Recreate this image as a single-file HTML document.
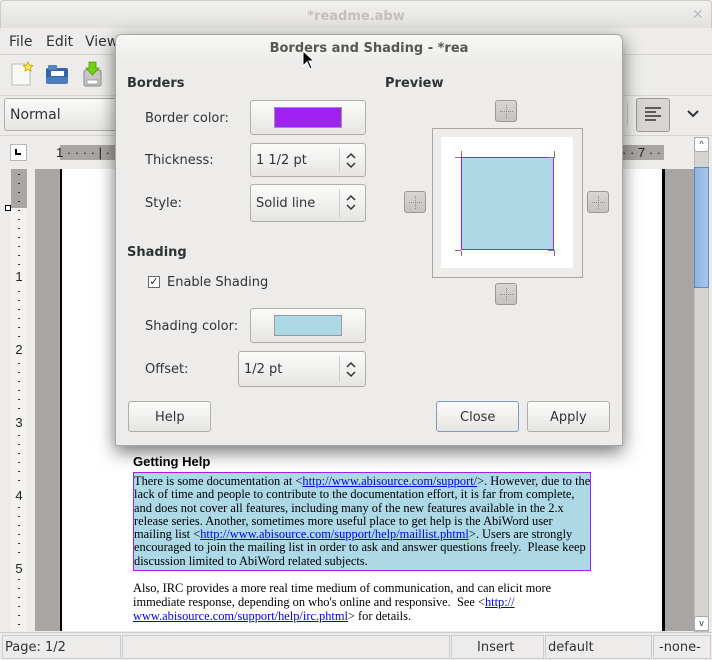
<!DOCTYPE html>
<html><head><meta charset="utf-8"><style>
*{margin:0;padding:0;box-sizing:border-box}
body{width:712px;height:660px;overflow:hidden;background:#edecea;font-family:"Liberation Sans","DejaVu Sans",sans-serif;font-size:13px;color:#2e3436;position:relative}
.a{position:absolute}
.btn{position:absolute;border:1px solid #b0aeaa;border-radius:3px;background:linear-gradient(#fbfbfa,#e6e5e2);}
.lbl{position:absolute;font-size:13px;color:#2e3436;white-space:nowrap;font-family:"DejaVu Sans",sans-serif}
.small{position:absolute;width:22px;height:22px;border:1px solid #9a9894;border-radius:3px;background:linear-gradient(#d8d7d4,#c4c3bf)}
.small:before{content:"";position:absolute;left:10px;top:4px;height:13px;border-left:1px dotted #8a8a8a}
.small:after{content:"";position:absolute;top:10px;left:4px;width:13px;border-top:1px dotted #8a8a8a}
.doc{position:absolute;font-family:"Liberation Serif",serif;font-size:12.4px;white-space:nowrap;color:#000}
.doc a{color:#00e;text-decoration:underline}
.spin{position:absolute;right:0;top:4px;bottom:4px;width:26px;border-left:1px solid #ccc}
</style></head><body>
<!-- title bar -->
<div class="a" style="left:0;top:0;width:712px;height:28px;background:linear-gradient(#f2f1f0,#e2e1df);border:1px solid #cfcdca;border-bottom:none;border-radius:4px 4px 0 0"></div>
<div class="a" style="left:0;top:9px;width:712px;text-align:center;font-weight:bold;color:#c2c0bc;font-size:13px;font-family:'DejaVu Sans',sans-serif">*readme.abw</div>
<div class="a" style="left:692px;top:6px;color:#bbb;font-size:14px;font-weight:bold">✕</div>
<!-- menu -->
<div class="a" style="left:0;top:28px;width:712px;height:27px;background:#edecea;border-bottom:1px solid #d6d4d0"></div>
<div class="lbl" style="left:9px;top:34px;font-size:14px">File</div>
<div class="lbl" style="left:46px;top:34px;font-size:14px">Edit</div>
<div class="lbl" style="left:85px;top:34px;font-size:14px">View</div>
<!-- toolbar -->
<div class="a" style="left:0;top:55px;width:712px;height:41px;background:#edecea;border-bottom:1px solid #d6d4d0"></div>
<svg class="a" style="left:8px;top:60px" width="100" height="28">
<path d="M4 4h13l5 5v16H4z" fill="#f8f8f6" stroke="#bbb"/><path d="M20 2l1.5 3 3.3.5-2.4 2.3.6 3.2-3-1.6-3 1.6.6-3.2-2.4-2.3 3.3-.5z" fill="#fce94f" stroke="#c4a000" stroke-width=".8"/>
<rect x="38" y="8" width="22" height="15" rx="2" fill="#3465a4"/><rect x="40" y="5" width="9" height="5" rx="1" fill="#5584c4"/><rect x="43" y="11" width="13" height="5" fill="#fff"/><rect x="38" y="17" width="22" height="7" rx="2" fill="#4a7cbf"/>
<rect x="76" y="10" width="17" height="16" rx="2" fill="#c8c8c4" stroke="#888"/><rect x="79" y="20" width="11" height="4" fill="#fff" stroke="#777" stroke-width=".6"/><path d="M81 2h7v6h3l-6.5 7-6.5-7h3z" fill="#73d216" stroke="#4e9a06" stroke-width=".8"/>
</svg>
<!-- format toolbar -->
<div class="a" style="left:0;top:96px;width:712px;height:40px;background:#edecea;border-bottom:1px solid #d6d4d0"></div>
<div class="btn" style="left:4px;top:98px;width:140px;height:33px"></div>
<div class="lbl" style="left:10px;top:107px;font-size:14px">Normal</div>
<div class="a" style="left:627px;top:103px;width:1px;height:22px;background:#c8c6c2"></div>
<div class="a" style="left:636px;top:98px;width:34px;height:34px;border:1px solid #9a9894;border-radius:3px;background:#d6d5d2"></div>
<svg class="a" style="left:643px;top:106px" width="22" height="18"><g stroke="#333" stroke-width="1.6"><path d="M2 2h16M2 6h11M2 10h16M2 14h11"/></g></svg>
<svg class="a" style="left:687px;top:110px" width="12" height="8"><path d="M1 1l5 5 5-5" stroke="#333" stroke-width="2" fill="none"/></svg>
<!-- ruler row -->
<div class="a" style="left:10px;top:144px;width:17px;height:17px;border:1px solid #b8b6b2;background:#fff"></div>
<div class="a" style="left:15px;top:149px;width:6px;height:6px;border-left:2px solid #000;border-bottom:2px solid #000"></div>
<div class="a" style="left:60px;top:145px;width:604px;height:15px;background:#a9a5a2"></div>
<div class="a" style="left:56px;top:145px;font-size:13px;color:#222">1 · · · · | ·</div>
<div class="a" style="left:622px;top:145px;font-size:13px;color:#222">· · 7 · ·</div>
<!-- left ruler -->
<div class="a" style="left:11px;top:169px;width:16px;height:462px;background:#f3f2f0"></div>
<div class="a" style="left:18px;top:174px;width:2px;height:456px;background:repeating-linear-gradient(#333 0 1px,transparent 1px 9px)"></div>
<div class="a" style="left:11px;top:169px;width:16px;height:39px;background:#a9a5a2"></div>
<div class="a" style="left:18px;top:174px;width:2px;height:34px;background:repeating-linear-gradient(#333 0 1px,transparent 1px 9px)"></div>
<div class="a" style="left:5px;top:205px;width:6px;height:6px;border:1px solid #000;background:#fff"></div>
<div class="a" style="left:12px;top:240px;width:14px;text-align:center;font-size:13px;color:#222;line-height:73px"><span style="background:#f3f2f0">1</span><br><span style="background:#f3f2f0">2</span><br><span style="background:#f3f2f0">3</span><br><span style="background:#f3f2f0">4</span><br><span style="background:#f3f2f0">5</span></div>
<!-- doc area -->
<div class="a" style="left:35px;top:169px;width:660px;height:462px;background:#a9a5a2"></div>
<div class="a" style="left:60px;top:169px;width:605px;height:462px;background:#fff;border-left:2px solid #000;border-right:3px solid #000"></div>
<!-- scrollbar -->
<div class="a" style="left:694px;top:137px;width:15px;height:495px;background:#d6d4d0;border:1px solid #bbb"></div>
<div class="a" style="left:694px;top:137px;width:15px;height:15px;background:#fff;border:1px solid #aaa;border-radius:3px;font-size:9px;text-align:center;line-height:13px">^</div>
<div class="a" style="left:694px;top:167px;width:15px;height:121px;background:linear-gradient(90deg,#8fb3e3,#a9c6ec);border:1px solid #5f89c2"></div>
<div class="a" style="left:694px;top:616px;width:15px;height:15px;background:#fff;border:1px solid #aaa;border-radius:3px;font-size:9px;text-align:center;line-height:13px">v</div>
<!-- document content -->
<div class="a" style="left:133px;top:454px;font-weight:bold;font-size:13px;color:#000">Getting Help</div>
<div class="a" style="left:133px;top:472px;width:458px;height:99px;background:#add8e6;border:1px solid #a020f0"></div>
<div class="doc" style="left:134px;top:475px;line-height:13.3px">There is some documentation at &lt;<a>http://www.abisource.com/support/</a>&gt;. However, due to the<br>lack of time and people to contribute to the documentation effort, it is far from complete,<br>and does not cover all features, including many of the new features available in the 2.x<br>release series. Another, sometimes more useful place to get help is the AbiWord user<br>mailing list &lt;<a>http://www.abisource.com/support/help/maillist.phtml</a>&gt;. Users are strongly<br>encouraged to join the mailing list in order to ask and answer questions freely.&nbsp; Please keep<br>discussion limited to AbiWord related subjects.</div>
<div class="doc" style="left:133px;top:582px;line-height:13.8px">Also, IRC provides a more real time medium of communication, and can elicit more<br>immediate response, depending on who's online and responsive.&nbsp; See &lt;<a>http://</a><br><a>www.abisource.com/support/help/irc.phtml</a>&gt; for details.</div>
<!-- status bar -->
<div class="a" style="left:0;top:632px;width:712px;height:28px;background:#edecea;border-top:1px solid #ccc"></div>
<div class="a" style="left:2px;top:635px;width:119px;height:24px;border:1px solid #ccc"></div>
<div class="a" style="left:122px;top:635px;width:328px;height:24px;border:1px solid #ccc"></div>
<div class="a" style="left:451px;top:635px;width:93px;height:24px;border:1px solid #ccc"></div>
<div class="a" style="left:545px;top:635px;width:107px;height:24px;border:1px solid #ccc"></div>
<div class="a" style="left:653px;top:635px;width:58px;height:24px;border:1px solid #ccc"></div>
<div class="lbl" style="left:5px;top:640px">Page: 1/2</div>
<div class="lbl" style="left:477px;top:640px">Insert</div>
<div class="lbl" style="left:548px;top:640px">default</div>
<div class="lbl" style="left:659px;top:640px">-none-</div>
<!-- dialog -->
<div class="a" style="left:115px;top:34px;width:508px;height:412px;background:#edecea;border:1px solid #a9a7a3;border-radius:6px 6px 0 0;box-shadow:0 6px 18px rgba(0,0,0,.55)"></div>
<div class="a" style="left:116px;top:35px;width:506px;height:28px;border-radius:6px 6px 0 0;background:linear-gradient(#f7f7f6,#edecea)"></div>
<div class="a" style="left:115px;top:41px;width:508px;text-align:center;font-weight:bold;color:#555753;font-size:13px;font-family:'DejaVu Sans',sans-serif">Borders and Shading - *rea</div>
<svg class="a" style="left:302px;top:50px" width="14" height="22"><path d="M1 1v15l4-4 3 7 2-1-3-7h5z" fill="#000" stroke="#fff" stroke-width="1"/></svg>
<div class="lbl" style="left:127px;top:76px;font-weight:bold">Borders</div>
<div class="lbl" style="left:385px;top:76px;font-weight:bold">Preview</div>
<div class="lbl" style="left:145px;top:111px">Border color:</div>
<div class="lbl" style="left:145px;top:153px">Thickness:</div>
<div class="lbl" style="left:145px;top:196px">Style:</div>
<div class="btn" style="left:250px;top:100px;width:116px;height:35px"></div>
<div class="a" style="left:274px;top:107px;width:68px;height:21px;background:#a020f0;border:1px solid #999"></div>
<div class="btn" style="left:250px;top:143px;width:116px;height:34px"><div class="spin"></div></div>
<div class="lbl" style="left:256px;top:153px">1 1/2 pt</div>
<div class="btn" style="left:250px;top:184px;width:116px;height:38px"><div class="spin"></div></div>
<div class="lbl" style="left:256px;top:196px">Solid line</div>
<div class="lbl" style="left:127px;top:245px;font-weight:bold">Shading</div>
<div class="a" style="left:148px;top:276px;width:12px;height:12px;border:1px solid #666;background:#fff;font-size:11px;line-height:10px;text-align:center;color:#222">✓</div>
<div class="lbl" style="left:167px;top:275px">Enable Shading</div>
<div class="lbl" style="left:145px;top:319px">Shading color:</div>
<div class="btn" style="left:250px;top:308px;width:116px;height:35px"></div>
<div class="a" style="left:274px;top:315px;width:68px;height:21px;background:#add8e6;border:1px solid #999"></div>
<div class="lbl" style="left:145px;top:362px">Offset:</div>
<div class="btn" style="left:238px;top:351px;width:128px;height:36px"><div class="spin"></div></div>
<div class="lbl" style="left:244px;top:362px">1/2 pt</div>
<svg class="a" style="left:345px;top:151px" width="12" height="230"><g stroke="#333" stroke-width="1.5" fill="none"><path d="M2 7l4-4 4 4M2 12l4 4 4-4"/><path d="M2 49l4-4 4 4M2 54l4 4 4-4"/><path d="M2 216l4-4 4 4M2 221l4 4 4-4"/></g></svg>
<div class="btn" style="left:128px;top:401px;width:83px;height:31px"></div>
<div class="lbl" style="left:155px;top:410px">Help</div>
<div class="btn" style="left:436px;top:401px;width:83px;height:31px;border-color:#7a9cc8"></div>
<div class="lbl" style="left:460px;top:410px">Close</div>
<div class="btn" style="left:527px;top:401px;width:83px;height:31px"></div>
<div class="lbl" style="left:550px;top:410px">Apply</div>
<!-- preview -->
<div class="small" style="left:495px;top:100px"></div>
<div class="small" style="left:404px;top:191px"></div>
<div class="small" style="left:587px;top:191px"></div>
<div class="small" style="left:495px;top:283px"></div>
<div class="a" style="left:432px;top:128px;width:151px;height:150px;border:1px solid #a9a7a3;background:#edecea"></div>
<div class="a" style="left:441px;top:137px;width:132px;height:131px;background:#fff"></div>
<div class="a" style="left:461px;top:157px;width:93px;height:93px;background:#add8e6;border:1px solid #a020f0"></div>
<svg class="a" style="left:455px;top:151px" width="105" height="105"><g stroke="#777" stroke-width="1"><path d="M0 6.5h6M6.5 0v6M93 6.5h7M99.5 0v6M0 99.5h6M6.5 100v5M93 99.5h7M99.5 100v5"/></g></svg>
</body></html>
